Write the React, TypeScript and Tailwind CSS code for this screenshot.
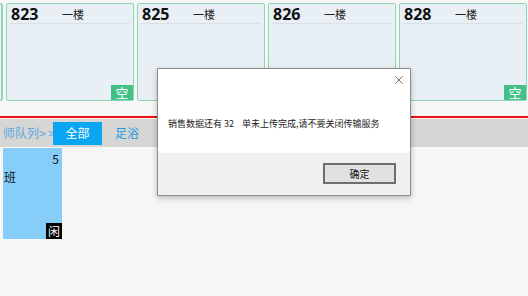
import { X } from "lucide-react";

const rooms = [
  { no: "823", floor: "一楼" },
  { no: "825", floor: "一楼" },
  { no: "826", floor: "一楼" },
  { no: "828", floor: "一楼" },
];

const cjk = { fontFamily: '"Noto Sans CJK SC", "Noto Sans", sans-serif' };

function RoomCard({ no, floor }: { no: string; floor: string }) {
  return (
    <div className="relative w-[128px] h-[98px] shrink-0 bg-[#e9f0f5] border border-[#8fd6b4] rounded-[2px]">
      <div className="flex items-center h-[19px] mx-[3px] mt-[1px] border-b border-[#d9dfe3]">
        <span
          className="w-[52px] pl-[1px] text-[16px] font-bold text-[#111] leading-none"
          style={{ fontFamily: '"Open Sans", sans-serif' }}
        >
          {no}
        </span>
        <span className="text-[11px] text-[#222] leading-none" style={cjk}>
          {floor}
        </span>
      </div>
      <div
        className="absolute right-0 bottom-0 w-[22px] h-[15px] bg-[#43c088] text-white text-[13px] leading-[15px] text-center"
        style={cjk}
      >
        空
      </div>
    </div>
  );
}

export default function App() {
  return (
    <div className="relative w-[528px] h-[296px] overflow-hidden bg-[#f6f6f6]" style={cjk}>
      {/* room cards, the first one scrolled off to the left */}
      <div className="flex gap-[3px] pt-[3px] ml-[-125px]">
        <div className="w-[128px] h-[98px] shrink-0 bg-[#e9f0f5] border border-[#8fd6b4] border-r-2 rounded-[2px]" />
        {rooms.map((r) => (
          <RoomCard key={r.no} {...r} />
        ))}
      </div>

      <div className="h-[15px]" />
      <div className="h-[2px] bg-[#ee1111]" />

      {/* tabs */}
      <div className="flex items-center h-[28px] mt-[1px] bg-[#d6d6d5] text-[12px]">
        <span className="w-[53px] pl-[3px] text-[#5ea6dc] whitespace-pre">师队列&gt; &gt;</span>
        <span className="w-[49px] h-[23px] flex items-center justify-center bg-[#0aa6f2] text-white">全部</span>
        <span className="ml-[13px] text-[#1c9ae0]">足浴</span>
      </div>

      {/* staff card */}
      <div className="relative ml-[3px] mt-[1px] w-[59px] h-[91px] bg-[#87cdfa]">
        <span className="absolute right-[3px] top-[2px] text-[12px] text-[#111]">5</span>
        <span className="absolute left-[1px] top-[20px] text-[12px] text-[#111]">班</span>
        <span className="absolute right-0 bottom-0 w-[16px] h-[16px] bg-black text-white text-[12px] leading-[16px] text-center">
          闲
        </span>
      </div>

      {/* message box */}
      <div className="absolute left-[157px] top-[68px] w-[254px] h-[128px] bg-white border border-[#8c8c8c] shadow-[0_2px_6px_rgba(0,0,0,0.25)] flex flex-col">
        <div className="relative flex-1 bg-white">
          <X className="absolute right-[4px] top-[4px] w-[14px] h-[14px] text-[#222]" strokeWidth={1.1} />
          <div className="absolute left-[10px] top-[50px] text-[9px] text-[#222] whitespace-pre leading-none">
            销售数据还有 32    单未上传完成,请不要关闭传输服务
          </div>
        </div>
        <div className="h-[42px] bg-[#f0f0f0] flex justify-end items-start pt-[10px] pr-[14px]">
          <div className="w-[73px] h-[21px] border-2 border-[#6e6e6e] bg-[#e1e1e1] flex items-center justify-center text-[10px] text-[#111]">
            确定
          </div>
        </div>
      </div>
    </div>
  );
}
